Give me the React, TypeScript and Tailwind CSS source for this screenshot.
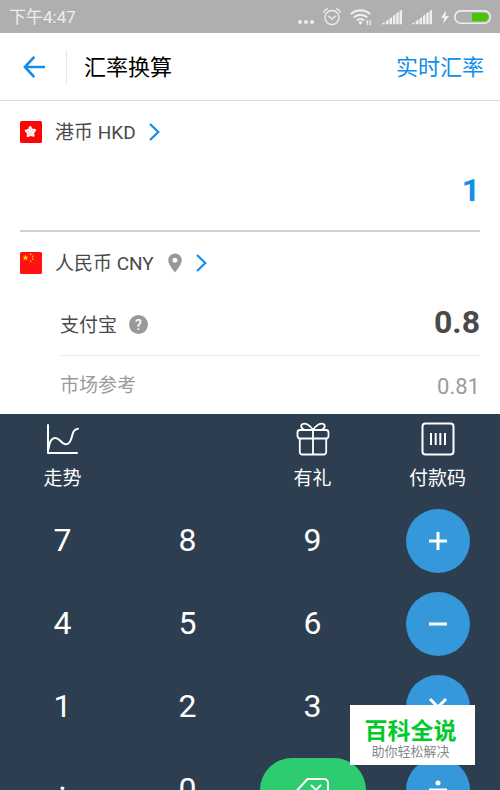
import React from "react";

function DotsIcon() {
  return (
    <svg aria-hidden="true" width="16" height="24" viewBox="0 0 16 24" fill="#eeeeee">
      <circle cx="2" cy="17" r="2" />
      <circle cx="8" cy="17" r="2" />
      <circle cx="14" cy="17" r="2" />
    </svg>
  );
}

function AlarmIcon() {
  return (
    <svg aria-hidden="true" width="18" height="24" viewBox="0 0 18 24" fill="none" stroke="#eeeeee" strokeWidth="1.4" strokeLinecap="round">
      <circle cx="9" cy="12.5" r="7" />
      <path d="M5.8 11.3 9 14l3.2-2.7" />
      <path d="M0.8 7.2Q1.6 4.6 4.4 3.8M17.2 7.2Q16.4 4.6 13.6 3.8" />
    </svg>
  );
}

function WifiIcon() {
  return (
    <svg aria-hidden="true" width="22" height="24" viewBox="0 0 22 24" fill="none" stroke="#eeeeee">
      <path d="M0.8 9a14.6 14.6 0 0 1 19.4 0" strokeWidth="2.2" />
      <path d="M3.8 12.4a10 10 0 0 1 13.4 0" strokeWidth="2.2" />
      <path d="M6.8 15.5a5.8 5.8 0 0 1 7.4 0" strokeWidth="2" />
      <circle cx="10.5" cy="17.8" r="1.7" fill="#eeeeee" stroke="none" />
      <path d="M17.5 15.5v4.5M16.2 17.2l1.3-1.7M20 15v5M20 20l1.2-1.5" strokeWidth="1.2" />
    </svg>
  );
}

function SignalIcon() {
  return (
    <svg aria-hidden="true" width="21" height="24" viewBox="0 0 21 24" fill="#eeeeee">
      <path d="M0 19.3 3.6 17v2.3zM4.8 16.2l2.8-1.8v4.9H4.800zM8.500 13.700l2.500-1.800v7.400H8.500zM11.900 11l2.500-1.700v10h-2.500zM15.200 8.600 17.700 7v12.300h-2.500zM18.500 6.200 21 4.600v14.700h-2.500z" />
    </svg>
  );
}

function BatteryIcon() {
  return (
    <span className="flex items-center gap-[5px]">
      <svg aria-hidden="true" width="8" height="24" viewBox="0 0 8 24" fill="#eeeeee">
        <path d="M4.8 5.5 0 13h3.2l-.9 5.8L8 11H4.6z" />
      </svg>
      <svg aria-hidden="true" width="38" height="24" viewBox="0 0 38 24">
        <rect x="0.9" y="5.9" width="35.4" height="12.4" rx="6" fill="none" stroke="#eeeeee" strokeWidth="1.6" />
        <path d="M18 8h12.3a4.1 4.1 0 0 1 0 8.2H18z" fill="#49c400" />
      </svg>
    </span>
  );
}

function BackIcon() {
  return (
    <svg aria-hidden="true" width="22" height="22" viewBox="0 0 22 22" fill="none" stroke="#108ee9" strokeWidth="2.6">
      <path d="M11.3 0.9 1.9 11l9.4 10.1M2 11h20" />
    </svg>
  );
}

function ChevronIcon() {
  return (
    <svg aria-hidden="true" width="12" height="18" viewBox="0 0 12 18" fill="none" stroke="#108ee9" strokeWidth="2.2">
      <path d="M1 1 9.300 9 1 17" />
    </svg>
  );
}

function HongKongFlag() {
  return (
    <svg aria-hidden="true" width="22" height="22" viewBox="0 0 22 22">
      <rect width="22" height="22" rx="1.5" fill="#fe0505" />
      {[0, 72, 144, 216, 288].map((angle) => (
        <g key={angle} transform={`rotate(${angle} 10.5 11)`}>
          <path d="M10.500 11C7.600 9.200 7.600 6.200 10.800 4.800c-.1 1 2.300 2 1.800 4.200-.3 1.100-1 1.700-2.100 2z" fill="#fff" />
          <path d="M10.500 10Q9.900 8.800 10.600 7.600" stroke="#fe0505" strokeWidth="0.3" fill="none" />
        </g>
      ))}
    </svg>
  );
}

function ChinaFlag() {
  return (
    <svg aria-hidden="true" width="22" height="22" viewBox="0 0 22 22">
      <rect width="22" height="22" rx="1.5" fill="#fe1212" />
      <path d="M5.500 2.500 6.300 4.700h2.300L6.800 6.100l.7 2.300-2-1.400-2 1.400.7-2.300L2.400 4.700h2.300z" fill="#ffde00" />
      <g fill="#ffb400">
        <circle cx="10.700" cy="2.300" r="0.900" />
        <circle cx="12.700" cy="4.300" r="0.900" />
        <circle cx="12.700" cy="7" r="0.900" />
        <circle cx="10.700" cy="9.200" r="0.900" />
      </g>
    </svg>
  );
}

function PinIcon() {
  return (
    <svg aria-hidden="true" width="16" height="20" viewBox="-1 0 16 20" fill="#999999">
      <path fillRule="evenodd" d="M7 .5a6.800 6.800 0 0 1 6.800 6.800C13.800 12 7 19.300 7 19.300S.2 12 .2 7.300A6.800 6.800 0 0 1 7 .5zm0 4.200a2.500 2.500 0 1 0 0 5 2.500 2.500 0 0 0 0-5z" />
    </svg>
  );
}

function TrendIcon() {
  return (
    <svg aria-hidden="true" width="34" height="34" viewBox="0 0 34 34" fill="none" stroke="#fff" strokeWidth="2" strokeLinecap="round" strokeLinejoin="round">
      <path d="M2 3v28h29" />
      <path d="M2.500 27C4 14 10 14.500 14 18.500c4.500 5 8.500 5.200 11-1 1.800-4.500 1.200-10 7-10.800" />
    </svg>
  );
}

function GiftIcon() {
  return (
    <svg aria-hidden="true" width="34" height="34" viewBox="0 0 34 34" fill="none" stroke="#fff" strokeWidth="1.800" strokeLinejoin="round">
      <rect x="1.500" y="8" width="31" height="8.500" rx="2.500" />
      <path d="M3.800 16.500V30a2.500 2.500 0 0 0 2.500 2.500h21.400a2.500 2.500 0 0 0 2.500-2.500V16.500M17 8v24.500" />
      <path d="M17 8C14.500 3.500 9.500.5 6.500 2 4 3.700 5.500 6.500 8.500 8M17 8c2.500-4.500 7.500-7.500 10.500-6C30 3.700 28.500 6.500 25.500 8" />
    </svg>
  );
}

function PayCodeIcon() {
  return (
    <svg aria-hidden="true" width="34" height="34" viewBox="0 0 34 34" fill="none" stroke="#fff" strokeWidth="2">
      <rect x="1.500" y="1.500" width="31" height="31" rx="3" />
      <path d="M10 11v12M14.700 11v12M19.300 11v12M24 11v12" />
    </svg>
  );
}

function BackspaceIcon() {
  return (
    <svg aria-hidden="true" width="34" height="24" viewBox="0 0 34 24" fill="none" stroke="#fff" strokeWidth="2" strokeLinejoin="round" strokeLinecap="round">
      <path d="M11.500 1H28a4 4 0 0 1 4 4v14a4 4 0 0 1-4 4H11.500L1.500 12z" />
      <path d="m15.500 7.500 9 9m0-9-9 9" strokeWidth="1.800" />
    </svg>
  );
}

const operators: Record<string, React.ReactNode> = {
  加: <path d="M11 2v18M2 11h18" />,
  减: <path d="M2 11h18" />,
  乘: <path d="m3 3 16 16M19 3 3 19" />,
  除: (
    <>
      <path d="M2 11h18" />
      <circle cx="11" cy="4" r="2.500" fill="#fff" stroke="none" />
      <circle cx="11" cy="18" r="2.500" fill="#fff" stroke="none" />
    </>
  ),
};

function DigitKey({ label }: { label: string }) {
  return (
    <button type="button" className="flex h-full w-full items-center justify-center pb-0.5 text-[32px] leading-10">
      {label}
    </button>
  );
}

function OperatorKey({ name }: { name: string }) {
  return (
    <button type="button" aria-label={name} className="flex size-16 items-center justify-center rounded-full bg-[#3498db]">
      <svg aria-hidden="true" width="22" height="22" viewBox="0 0 22 22" fill="none" stroke="#fff" strokeWidth="3">
        {operators[name]}
      </svg>
    </button>
  );
}

function ShortcutKey({ label, children }: { label: string; children: React.ReactNode }) {
  return (
    <button type="button" className="flex flex-col items-center gap-[9px] pt-2 text-[19px] leading-7">
      {children}
      {label}
    </button>
  );
}

const rows = [
  { digits: ["7", "8", "9"], operator: "加" },
  { digits: ["4", "5", "6"], operator: "减" },
  { digits: ["1", "2", "3"], operator: "乘" },
  { digits: ["·", "0"], operator: "除" },
];

export default function App() {
  return (
    <div className="relative flex h-screen flex-col overflow-hidden bg-white font-[Roboto,'Noto_Sans_CJK_SC',sans-serif] text-[#4a4a4a]">
      <div className="flex h-[33px] shrink-0 items-center justify-between bg-[#afafaf] pr-2 pl-[9px] text-[#eeeeee]">
        <span className="text-[17px] leading-6">下午4:47</span>
        <div className="flex items-center gap-[9px]">
          <DotsIcon />
          <AlarmIcon />
          <WifiIcon />
          <SignalIcon />
          <SignalIcon />
          <BatteryIcon />
        </div>
      </div>

      <header className="flex h-[68px] shrink-0 items-center border-b border-[#dcdcdc] pr-4 pl-[23px]">
        <button type="button" aria-label="返回">
          <BackIcon />
        </button>
        <h1 className="ml-[21px] flex h-[34px] items-center border-l border-[#e5e5e5] pt-0.5 pl-[17px] text-[22px] leading-8 text-black">汇率换算</h1>
        <a href="#rates" className="ml-auto pt-0.5 text-[22px] leading-8 text-[#108ee9]">
          实时汇率
        </a>
      </header>

      <main className="shrink-0 px-5">
        <section className="border-b-2 border-[#d0d0d0] pb-[13px]">
          <div className="flex h-[62px] items-center">
            <button type="button" className="flex items-center gap-[13px] text-[19px] leading-7">
              <HongKongFlag />
              <label htmlFor="amount" className="pt-0.5">
                港币 HKD
              </label>
              <ChevronIcon />
            </button>
          </div>
          <input
            id="amount"
            type="text"
            inputMode="decimal"
            defaultValue="1"
            className="block h-[54px] w-full bg-transparent text-right text-[32px] font-bold text-[#108ee9] outline-none"
          />
        </section>

        <section>
          <div className="flex h-[62px] items-center">
            <button type="button" className="flex items-center gap-[13px] text-[19px] leading-7">
              <ChinaFlag />
              <span className="pt-0.5">人民币 CNY</span>
              <PinIcon />
              <ChevronIcon />
            </button>
          </div>
          <dl className="ml-10">
            <div className="flex h-[62px] items-center justify-between border-b border-[#ededed]">
              <dt className="flex items-center gap-3 text-[19px] leading-7">
                <span className="pt-0.5">支付宝</span>
                <button type="button" aria-label="说明" className="flex size-[19px] items-center justify-center rounded-full bg-[#999999] text-[14px] leading-none font-medium text-white">
                  ?
                </button>
              </dt>
              <dd className="pb-1.5 text-[32px] leading-10 font-bold">0.8</dd>
            </div>
            <div className="flex h-[58px] items-center justify-between text-[#9b9b9b]">
              <dt className="pt-0.5 text-[19px] leading-7">市场参考</dt>
              <dd className="pt-1 text-[22px] leading-7">0.81</dd>
            </div>
          </dl>
        </section>
      </main>

      <div className="flex-auto bg-[#2d3e50] text-white">
        <div className="grid h-[85px] grid-cols-4">
          <ShortcutKey label="走势">
            <TrendIcon />
          </ShortcutKey>
          <span />
          <ShortcutKey label="有礼">
            <GiftIcon />
          </ShortcutKey>
          <ShortcutKey label="付款码">
            <PayCodeIcon />
          </ShortcutKey>
        </div>
        {rows.map((row) => (
          <div key={row.operator} className="grid h-[83px] grid-cols-4 place-items-center">
            {row.digits.map((digit) => (
              <DigitKey key={digit} label={digit} />
            ))}
            {row.digits.length === 2 && (
              <button type="button" aria-label="删除" className="flex h-16 w-[106px] items-center justify-center rounded-full bg-[#2ecc71]">
                <BackspaceIcon />
              </button>
            )}
            <OperatorKey name={row.operator} />
          </div>
        ))}
      </div>

      <aside className="absolute right-[25px] bottom-[25px] flex h-[60px] w-[125px] flex-col items-center justify-center bg-white pt-2.5 pr-1">
        <strong className="text-[23px] leading-6 font-bold text-[#00c92b]">百科全说</strong>
        <span className="text-[13px] leading-4 text-[#888888]">助你轻松解决</span>
      </aside>
    </div>
  );
}
